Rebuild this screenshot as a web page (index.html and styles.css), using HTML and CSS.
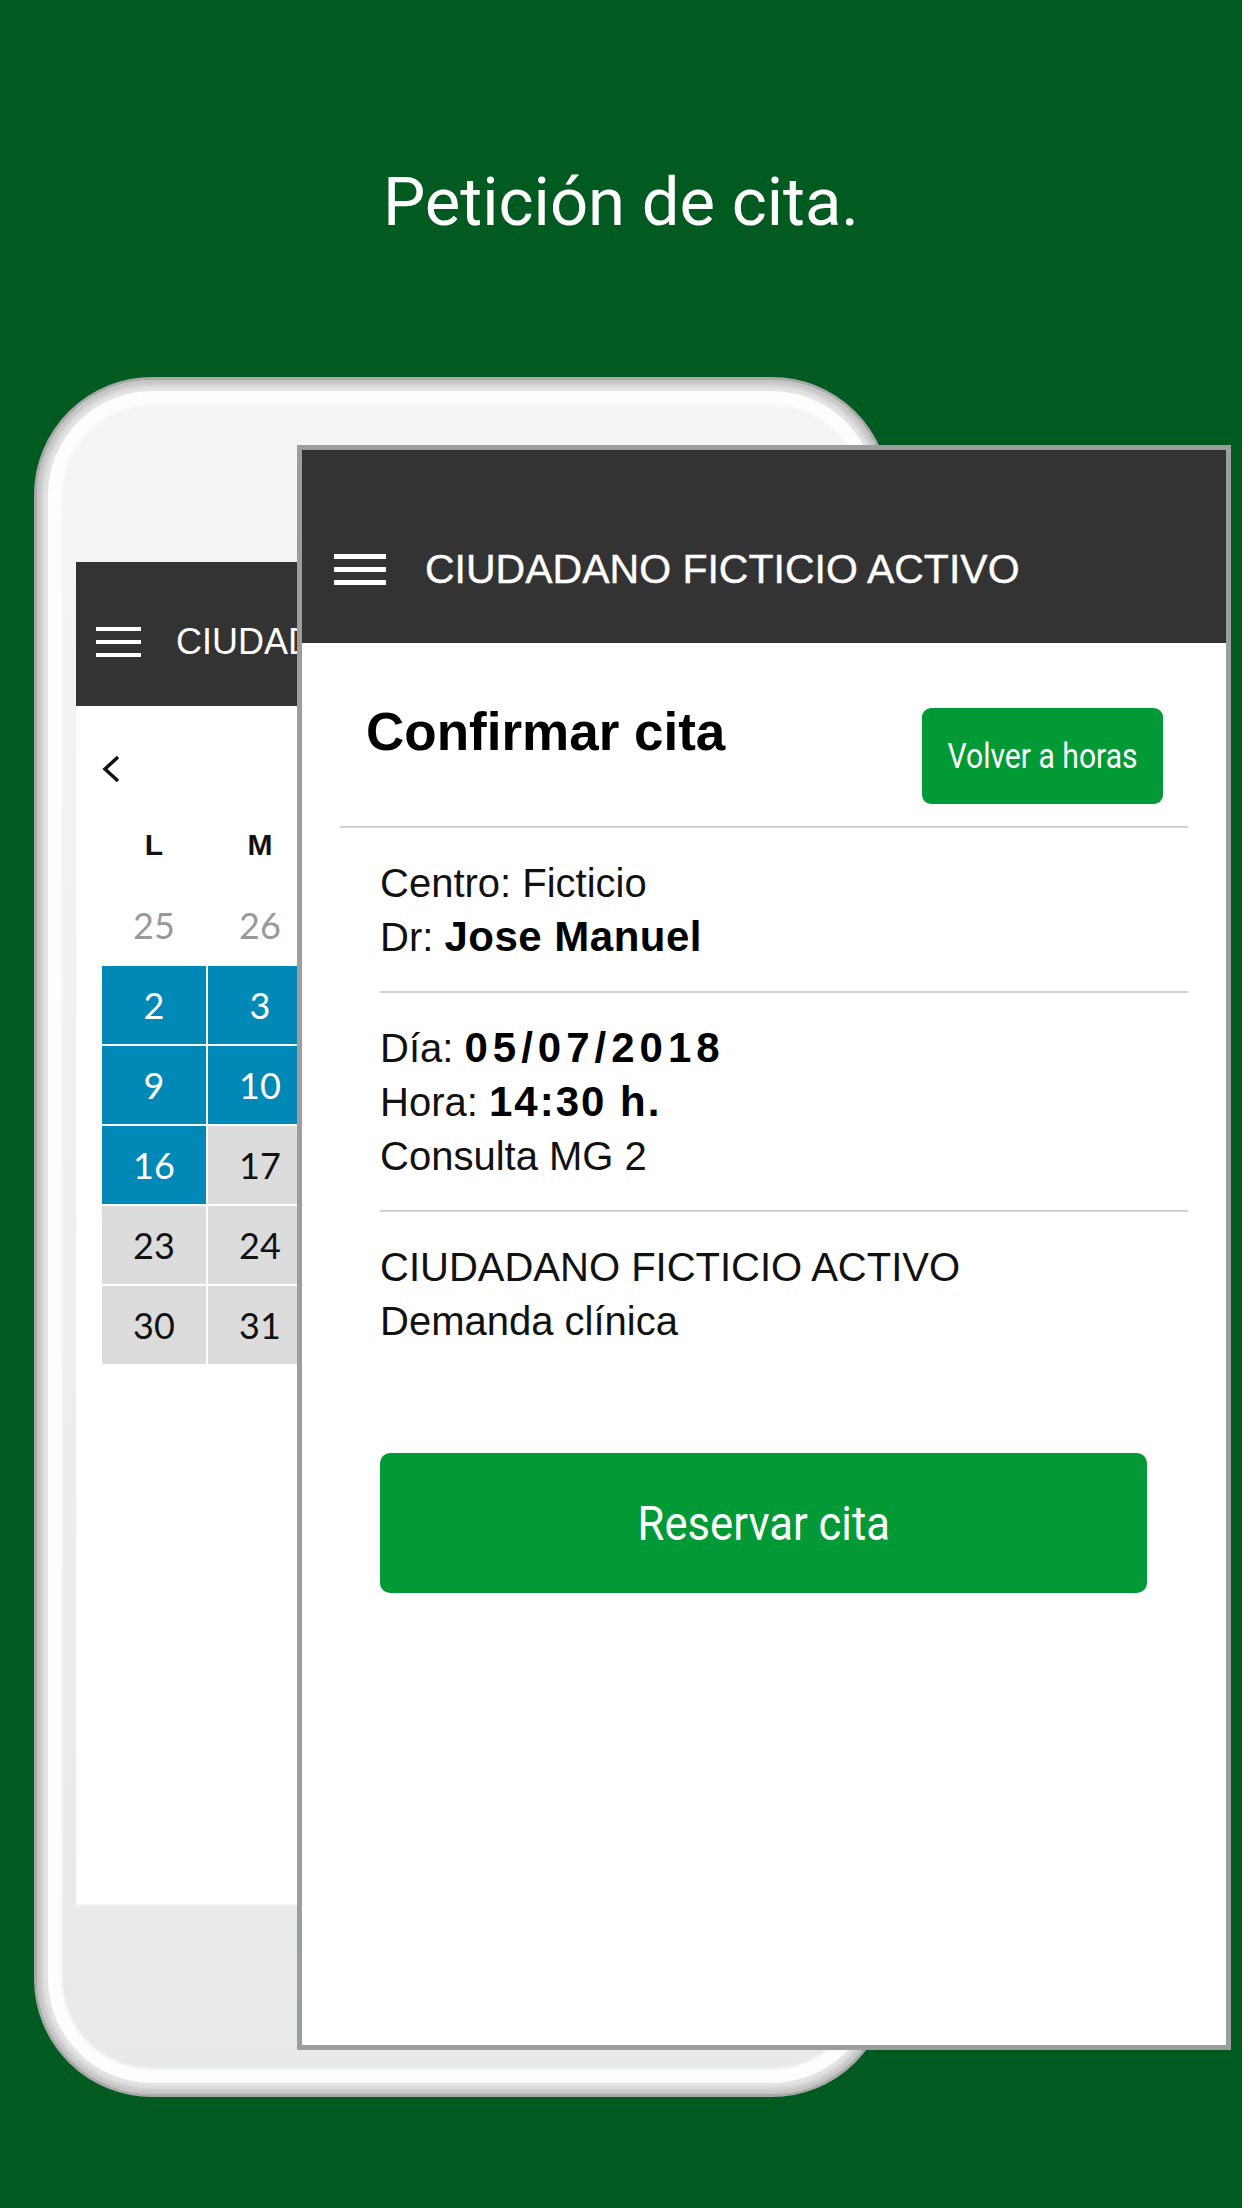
FILE: index.html
```html
<!DOCTYPE html>
<html lang="es">
<head>
    <meta charset="UTF-8">
    <meta name="viewport" content="width=device-width, initial-scale=1.0">
    <title>Petición de cita</title>
    <link rel="stylesheet" href="styles.css">
</head>
<body>
    <h1 class="title">Petición de cita.</h1>

    <div class="stage">
        <!-- phone in the background: calendar screen (only the visible strip) -->
        <div class="phone">
            <div class="screen">
                <header class="bar bar-back">
                    <svg class="menu" width="45" height="30" viewBox="0 0 45 30">
                        <rect x="0" y="0" width="45" height="4" fill="#fff"/>
                        <rect x="0" y="13" width="45" height="4" fill="#fff"/>
                        <rect x="0" y="26" width="45" height="4" fill="#fff"/>
                    </svg>
                    <span>CIUDADANO FICTICIO ACTIVO</span>
                </header>
                <div class="calendar">
                    <div class="cal-nav">
                        <svg width="20" height="28" viewBox="0 0 20 28">
                            <polyline points="17,2 4,14 17,26" fill="none" stroke="#111" stroke-width="3.5"/>
                        </svg>
                    </div>
                    <div class="cal-grid">
                        <div class="dow">L</div><div class="dow">M</div>
                        <div class="day other">25</div><div class="day other">26</div>
                        <div class="day free">2</div><div class="day free">3</div>
                        <div class="day free">9</div><div class="day free">10</div>
                        <div class="day free">16</div><div class="day busy">17</div>
                        <div class="day busy">23</div><div class="day busy">24</div>
                        <div class="day busy">30</div><div class="day busy">31</div>
                    </div>
                </div>
            </div>
        </div>

        <!-- screen in front: confirmation -->
        <div class="front">
            <header class="bar bar-front">
                <svg class="menu" width="52" height="31" viewBox="0 0 52 31">
                    <rect x="0" y="0" width="52" height="5" fill="#fff"/>
                    <rect x="0" y="13" width="52" height="5" fill="#fff"/>
                    <rect x="0" y="26" width="52" height="5" fill="#fff"/>
                </svg>
                <span>CIUDADANO FICTICIO ACTIVO</span>
            </header>

            <main class="confirm">
                <div class="confirm-head">
                    <h2>Confirmar cita</h2>
                    <a class="btn btn-small" href="#"><span>Volver a horas</span></a>
                </div>

                <div class="info">
                    <section>
                        <p>Centro: Ficticio<br>Dr: <b>Jose Manuel</b></p>
                    </section>
                    <section>
                        <p>Día: <b class="date">05/07/2018</b><br>Hora: <b class="time">14:30 h.</b><br>Consulta MG 2</p>
                    </section>
                    <section>
                        <p>CIUDADANO FICTICIO ACTIVO<br>Demanda clínica</p>
                    </section>
                </div>

                <a class="btn btn-big" href="#"><span>Reservar cita</span></a>
            </main>
        </div>
    </div>
</body>
</html>
```

FILE: styles.css
```css
body {
    margin: 0;
    width: 1242px;
    height: 2208px;
    overflow: hidden;
    background-color: #015a1f;
    font-family: 'Liberation Sans', Arial, sans-serif;
}

.title {
    margin: 0;
    padding-top: 169px;
    font-family: Roboto, sans-serif;
    font-weight: 400;
    font-size: 67px;
    line-height: 67px;
    color: #fff;
    text-align: center;
}

.stage {
    position: relative;
    display: flow-root;
}

/* back phone */
.phone {
    box-sizing: border-box;
    width: 856px;
    height: 1720px;
    margin: 141px 0 0 34px;
    padding: 182px 36px 190px 39px;
    border: 3px solid #a9a9a9;
    border-radius: 118px;
    background: linear-gradient(#f5f5f5, #e8e9e9);
    box-shadow: inset 0 0 4px 5px #c4c4c4, inset 0 0 0 11px #e3e3e3, inset 0 0 3px 25px #fdfdfd;
}

.screen {
    height: 100%;
    display: flex;
    flex-direction: column;
    background: #fff;
    border-bottom: 2px solid #f6f6f6;
    overflow: hidden;
}

.bar {
    display: flex;
    align-items: center;
    box-sizing: border-box;
    background-color: #333;
    color: #fff;
    flex: none;
}
.bar span {
    line-height: 1;
    white-space: nowrap;
}

.bar-back {
    height: 144px;
    padding: 16px 0 0 20px;
    gap: 35px;
}
.bar-back span {
    font-size: 36px;
    max-width: 121px;
    overflow: hidden;
}

.calendar {
    flex: 1;
    padding: 0 26px;
}
.cal-nav {
    box-sizing: border-box;
    height: 100px;
    padding-top: 49px;
}
.cal-nav svg {
    display: block;
    margin-left: -1px;
}
.cal-grid {
    display: grid;
    grid-template-columns: repeat(2, 104px);
    grid-auto-rows: 78px;
    gap: 2px;
}
.dow,
.day {
    display: flex;
    align-items: center;
    justify-content: center;
}
.dow {
    font-weight: bold;
    font-size: 30px;
    color: #111;
}
.day {
    font-family: Lato, sans-serif;
    font-size: 36px;
    color: #111;
}
.day.other {
    color: #999;
}
.day.free {
    background-color: #0088b6;
    color: #fff;
}
.day.busy {
    background-color: #dcdcdc;
}

/* front screen */
.front {
    position: absolute;
    left: 297px;
    top: 209px;
    box-sizing: border-box;
    width: 934px;
    height: 1605px;
    border: 5px solid #9c9d9c;
    background-color: #fff;
    display: flex;
    flex-direction: column;
}

.bar-front {
    height: 193px;
    padding: 45px 0 0 32px;
    gap: 39px;
}
.bar-front span {
    font-size: 41px;
    -webkit-text-stroke: 0.4px #fff;
}

.confirm-head {
    display: flex;
    justify-content: space-between;
    align-items: flex-start;
    margin: 0 38px;
    padding: 62px 25px 22px 26px;
    border-bottom: 2px solid #d2d2d2;
}
.confirm-head h2 {
    margin: 0;
    font-size: 53px;
    line-height: 1;
    font-weight: bold;
    color: #000;
}

.btn {
    display: flex;
    align-items: center;
    justify-content: center;
    background-color: #029a36;
    color: #fff;
    text-decoration: none;
    font-family: Roboto, sans-serif;
}
.btn span {
    display: inline-block;
    white-space: nowrap;
}
.btn-small {
    width: 241px;
    height: 96px;
    margin-top: 3px;
    border-radius: 9px;
    font-size: 35px;
}
.btn-small span {
    transform: scaleX(0.86);
}
.btn-big {
    width: 767px;
    height: 140px;
    margin: 78px 0 0 78px;
    border-radius: 10px;
    font-size: 49px;
}
.btn-big span {
    transform: scaleX(0.89);
}

.info {
    margin: 0 38px 0 78px;
}
.info section {
    padding: 28px 0 27px;
    border-bottom: 2px solid #d2d2d2;
}
.info section:last-child {
    border-bottom: none;
}
.info p {
    margin: 0;
    font-size: 40px;
    line-height: 54px;
    color: #111;
}
.info b {
    font-size: 42px;
    line-height: 1;
    letter-spacing: 0.5px;
    color: #000;
}
.info b.date {
    letter-spacing: 5px;
}
.info b.time {
    letter-spacing: 2px;
}
```
